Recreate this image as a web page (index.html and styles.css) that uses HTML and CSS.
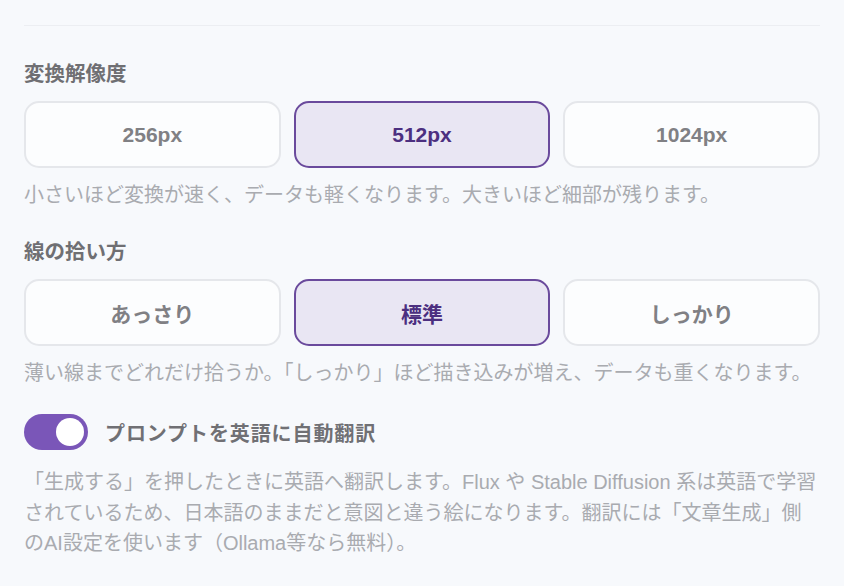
FILE: index.html
```html
<!DOCTYPE html>
<html lang="ja">
<head>
<meta charset="utf-8">
<link rel="stylesheet" href="styles.css">
</head>
<body>
<div class="panel">
  <div class="field">
    <div class="label">変換解像度</div>
    <div class="choices">
      <button class="choice num">256px</button>
      <button class="choice num selected">512px</button>
      <button class="choice num">1024px</button>
    </div>
    <p class="hint">小さいほど変換が速く、データも軽くなります。大きいほど細部が残ります。</p>
  </div>
  <div class="field second">
    <div class="label">線の拾い方</div>
    <div class="choices">
      <button class="choice">あっさり</button>
      <button class="choice selected">標準</button>
      <button class="choice">しっかり</button>
    </div>
    <p class="hint">薄い線までどれだけ拾うか。「しっかり」ほど描き込みが増え、データも重くなります。</p>
  </div>
  <div class="toggle-field">
    <label class="toggle-row">
      <span class="switch on"><span class="knob"></span></span>
      <span class="toggle-label">プロンプトを英語に自動翻訳</span>
    </label>
    <p class="desc">「生成する」を押したときに英語へ翻訳します。Flux や Stable Diffusion 系は英語で学習されているため、日本語のままだと意図と違う絵になります。翻訳には「文章生成」側のAI設定を使います（Ollama等なら無料）。</p>
  </div>
</div>
</body>
</html>
```
FILE: styles.css
```css
* { box-sizing: border-box; }
html, body {
  margin: 0;
  padding: 0;
  background: #f7f9fc;
}
body {
  font-family: "Liberation Sans", "Noto Sans CJK JP", sans-serif;
  width: 844px;
  height: 586px;
  overflow: hidden;
}
.panel {
  margin: 25px 24px 0;
  border-top: 1px solid #eceef2;
  padding-top: 34px;
}
.label {
  font-size: 20.5px;
  line-height: 28px;
  font-weight: 700;
  color: #6f6f73;
  margin-bottom: 13px;
}
.choices {
  display: grid;
  grid-template-columns: 1fr 1fr 1fr;
  column-gap: 13px;
}
.choice {
  height: 67px;
  border: 2px solid #e5e7eb;
  border-radius: 15px;
  background: #fcfdfe;
  font-family: "Liberation Sans", "Noto Sans CJK JP", sans-serif;
  font-size: 21px;
  font-weight: 700;
  color: #808084;
  padding: 0;
}
.choice.selected {
  background: #e9e6f3;
  border: 2px solid #6a4a9c;
  color: #4c2f80;
}
.hint {
  margin: 13px 0 0;
  font-size: 20px;
  line-height: 28px;
  color: #a9abb0;
}
.second { margin-top: 29px; }
.toggle-field { margin-top: 27px; }
.toggle-row {
  display: flex;
  align-items: center;
  gap: 17px;
}
.switch {
  width: 64px;
  height: 36px;
  border-radius: 18px;
  background: #7a56b8;
  display: flex;
  align-items: center;
  justify-content: flex-end;
  padding: 0 4px;
}
.knob {
  width: 28px;
  height: 28px;
  border-radius: 50%;
  background: #ffffff;
}
.toggle-label {
  font-size: 20px;
  font-weight: 700;
  color: #707074;
  letter-spacing: 0.9px;
}
.desc {
  margin: 17px 0 0;
  font-size: 20px;
  line-height: 30.5px;
  color: #a9abb0;
}
```
